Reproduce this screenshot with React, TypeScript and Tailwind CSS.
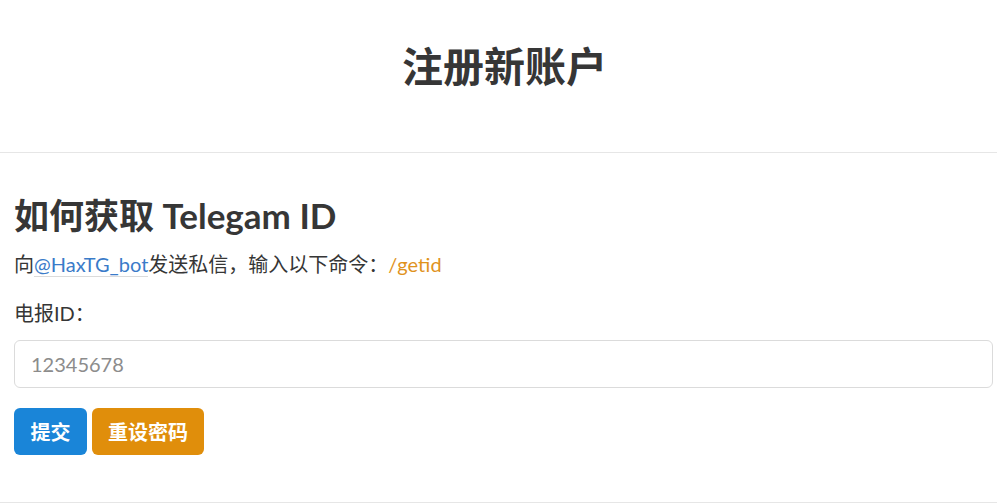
export default function App() {
  return (
    <main
      className="min-h-screen bg-white text-[#363636]"
      style={{ fontFamily: 'Lato, "Noto Sans CJK SC", sans-serif' }}
    >
      <header className="h-[152px] pt-[42px] pl-[12px] text-center">
        <h1 className="text-[41px] font-bold leading-[50px]">注册新账户</h1>
      </header>

      <section className="border-t border-[#e6e6e6] border-b pt-[41px] pb-[47px] pl-[14px] pr-[4px]">
        <h2 className="text-[35px] font-bold leading-[42px]">如何获取 Telegam ID</h2>
        <p className="mt-[13px] text-[20px] leading-[30px]">
          向
          <a href="#" className="border-b border-[#dbdbdb] text-[#3a7bc9]">
            @HaxTG_bot
          </a>
          发送私信，输入以下命令：
          <span className="text-[#e0921d]">/getid</span>
        </p>

        <label className="mt-[19px] block text-[20px] leading-[30px]">电报ID：</label>
        <input
          className="mt-[12px] block h-[48px] w-full rounded-[6px] border border-[#dbdbdb] px-[16px] text-[20px] placeholder:text-[#8c8c8c] outline-none"
          placeholder="12345678"
        />

        <div className="mt-[20px] flex gap-[5px]">
          <button className="h-[47px] w-[73px] rounded-[6px] bg-[#1a85d8] text-[20px] font-bold text-white">
            提交
          </button>
          <button className="h-[47px] w-[112px] rounded-[6px] bg-[#e08e0b] text-[20px] font-bold text-white">
            重设密码
          </button>
        </div>
      </section>
    </main>
  );
}
